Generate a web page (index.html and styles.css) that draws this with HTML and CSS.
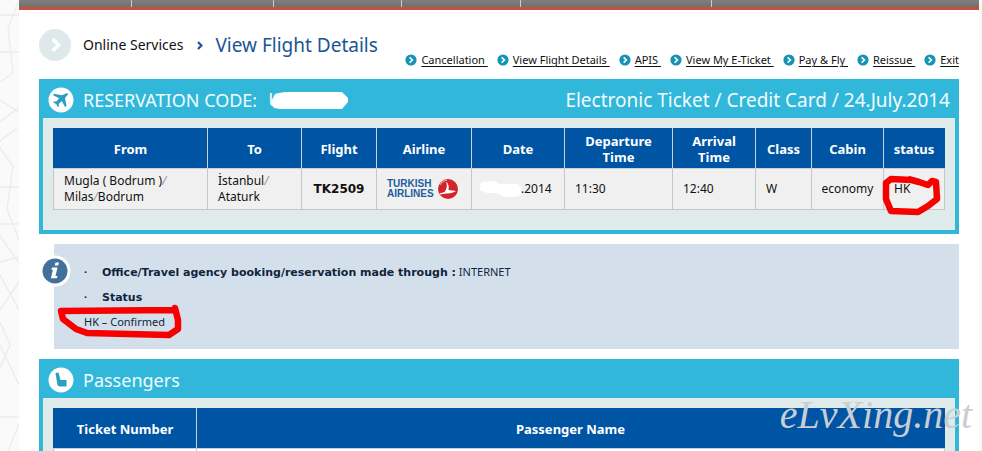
FILE: index.html
```html
<!DOCTYPE html>
<html lang="en">
<head>
  <meta charset="UTF-8">
  <meta name="viewport" content="width=device-width, initial-scale=1.0">
  <title>View Flight Details</title>
  <link rel="stylesheet" href="styles.css">
</head>
<body>
  <svg class="sprite" aria-hidden="true">
    <symbol id="arrow" viewBox="0 0 12 12">
      <circle cx="6" cy="6" r="5.6" fill="#1593b5"/>
      <path d="M4.6 3.4 7.4 6 4.6 8.6" fill="none" stroke="#fff" stroke-width="1.6"/>
    </symbol>
    <symbol id="scribble" viewBox="0 0 19 451">
      <path d="M0 15H19M18 2 8 28 13 73 0 82M0 52H19M0 100 19 112M0 122 19 107M0 141 17 128M0 148 13 166 7 209 19 240M0 187H19M0 224H19M0 262 19 257M0 236 19 263M0 275 19 310M0 310 19 282M0 322 10 345 0 368M0 345 19 385M8 451 19 424M0 417H19" fill="none" stroke="#ececec" stroke-width="1.4"/>
    </symbol>
  </svg>

  <div class="layout">
    <div class="edge"><svg class="edge-lines" aria-hidden="true"><use href="#scribble"/></svg></div>

    <main class="page">
      <nav class="topbar" aria-label="Main">
        <span class="tab tab-1"></span>
        <span class="tab tab-2"></span>
        <span class="tab tab-3"></span>
        <span class="tab tab-4"></span>
        <span class="tab tab-5"></span>
      </nav>

      <div class="content">
        <header class="heading">
          <svg class="heading-icon" viewBox="0 0 32 32" aria-hidden="true">
            <circle cx="16" cy="16" r="16" fill="#dfe9eb"/>
            <path d="M13.5 10 19.5 16 13.5 22" fill="none" stroke="#fff" stroke-width="3.6"/>
          </svg>
          <span class="section">Online Services</span>
          <svg class="crumb" viewBox="0 0 6 9" aria-hidden="true"><path d="M1 1 4.4 4.5 1 8" fill="none" stroke="#1b5595" stroke-width="2.2"/></svg>
          <h1>View Flight Details</h1>
        </header>

        <ul class="actions">
          <li><svg class="arrow" aria-hidden="true"><use href="#arrow"/></svg><a href="#">Cancellation&nbsp;</a></li>
          <li><svg class="arrow" aria-hidden="true"><use href="#arrow"/></svg><a href="#">View Flight Details&nbsp;</a></li>
          <li><svg class="arrow" aria-hidden="true"><use href="#arrow"/></svg><a href="#">APIS&nbsp;</a></li>
          <li><svg class="arrow" aria-hidden="true"><use href="#arrow"/></svg><a href="#">View My E-Ticket&nbsp;</a></li>
          <li><svg class="arrow" aria-hidden="true"><use href="#arrow"/></svg><a href="#">Pay &amp; Fly&nbsp;</a></li>
          <li><svg class="arrow" aria-hidden="true"><use href="#arrow"/></svg><a href="#">Reissue&nbsp;</a></li>
          <li><svg class="arrow" aria-hidden="true"><use href="#arrow"/></svg><a href="#">Exit</a></li>
        </ul>

        <section class="panel">
          <div class="panel-head">
            <svg class="panel-icon" viewBox="0 0 26 26" aria-hidden="true">
              <circle cx="13" cy="13" r="12.5" fill="#fff"/>
              <path d="M18.6 6.3c1-.4 1.8.3 1.3 1.3L17 11l1.5 8-1.5 1-3.2-6-3.1 3 .2 2.4-1 .8-1.7-3.2-3.1-1.6.8-1 2.4.1 2.8-3.2-6-3.1 1-1.4 7.8 1.4z" fill="#2a9fc2"/>
            </svg>
            <h2>RESERVATION CODE:</h2>
            <span class="code">U<svg class="blot" viewBox="0 0 77 18" aria-hidden="true"><path d="M4 2 8 1 14 0H71L77 6V10L71 17H9L3 16 0 10z" fill="#fff"/></svg></span>
            <span class="issued">Electronic Ticket / Credit Card / 24.July.2014</span>
          </div>
          <div class="panel-body">
            <table class="grid flights">
              <colgroup>
                <col class="c-from"><col class="c-to"><col class="c-flight"><col class="c-airline"><col class="c-date">
                <col class="c-dep"><col class="c-arr"><col class="c-class"><col class="c-cabin"><col class="c-status">
              </colgroup>
              <thead>
                <tr>
                  <th>From</th><th>To</th><th>Flight</th><th>Airline</th><th>Date</th>
                  <th>Departure Time</th><th>Arrival Time</th><th>Class</th><th>Cabin</th><th>status</th>
                </tr>
              </thead>
              <tbody>
                <tr>
                  <td>Mugla ( Bodrum )<i>/</i><br>Milas<i>/</i>Bodrum</td>
                  <td>İstanbul<i>/</i><br>Ataturk</td>
                  <td class="flight-no">TK2509</td>
                  <td>
                    <div class="logo">
                      <span class="logo-text">TURKISH<br>AIRLINES</span>
                      <svg class="logo-mark" viewBox="0 0 20 20" aria-hidden="true">
                        <circle cx="10" cy="10" r="10" fill="#d3242b"/>
                        <path d="M2 6A9 9 0 0 1 9 1" fill="none" stroke="#ee8a85" stroke-width="1.5"/>
                        <path d="M8 2.5C11 5 11 8.5 10.5 11L18 12C15 14 11 14.5 8 14.5L2 15.5 1.5 14.5 6.5 13C9 10 9.5 6 8 2.5z" fill="#fff"/>
                      </svg>
                    </div>
                  </td>
                  <td class="date"><svg class="smudge" viewBox="0 0 41 16" aria-hidden="true"><path d="M3 1 15 0 20 3 38 3 41 6V14L36 16H24L17 12H7L0 9V3z" fill="#fff"/></svg>.2014</td>
                  <td>11:30</td>
                  <td>12:40</td>
                  <td>W</td>
                  <td class="middle">economy</td>
                  <td class="status">HK
                    <svg class="ring ring-status" viewBox="0 0 60 44" aria-hidden="true"><path d="M29 6 9 5 4 9 4 25 9 37 36 38 46 32 55 25 54 8 50 7 46 11 37 8 26 5" fill="none" stroke="#f70000" stroke-width="6.5" stroke-linejoin="round"/></svg>
                  </td>
                </tr>
              </tbody>
            </table>
          </div>
        </section>

        <section class="info">
          <svg class="info-icon" viewBox="0 0 32 32" aria-hidden="true">
            <circle cx="16" cy="16" r="15.5" fill="#fff"/>
            <circle cx="16" cy="16" r="12.5" fill="#42709a"/>
            <path d="M16.5 7.5h3.5l-.8 3h-3.5zM13 12.5h5.5l-2 8.5h2l-.6 2.3h-6l2-8.5h-1.5z" fill="#fff"/>
          </svg>
          <ul>
            <li><b>Office/Travel agency booking/reservation made through :</b> INTERNET</li>
            <li><b>Status</b></li>
          </ul>
          <p>HK – Confirmed
            <svg class="ring ring-confirmed" viewBox="0 0 128 36" aria-hidden="true"><path d="M118 6 5 7 7 15 20 25 31 29 113 31 122 25 122 16 119 4" fill="none" stroke="#f70000" stroke-width="6.5" stroke-linejoin="round" stroke-linecap="round"/></svg>
          </p>
        </section>

        <section class="panel">
          <div class="panel-head">
            <svg class="panel-icon" viewBox="0 0 26 26" aria-hidden="true">
              <circle cx="13" cy="13" r="12.5" fill="#fff"/>
              <path d="M7.5 6 10.5 5.5 12.5 13H18.5V19.5H12L9.5 18.5z" fill="#2a9fc2"/>
            </svg>
            <h2>Passengers</h2>
          </div>
          <div class="panel-body">
            <table class="grid passengers">
              <colgroup><col class="c-ticket"><col></colgroup>
              <thead>
                <tr><th>Ticket Number</th><th>Passenger Name</th></tr>
              </thead>
              <tbody>
                <tr><td></td><td></td></tr>
              </tbody>
            </table>
          </div>
        </section>
      </div>
    </main>

    <div class="edge edge-right"></div>
    <div class="watermark">eLvXing.net</div>
  </div>
</body>
</html>
```
FILE: styles.css
```css
body {
  margin: 0;
  font-family: "Noto Sans", "Open Sans", sans-serif;
  font-size: 12px;
  line-height: 16px;
  color: #111;
  background: #fff;
}
h1, h2, ul, p {
  margin: 0;
  padding: 0;
  font-weight: normal;
}
ul {
  list-style: none;
}
.sprite {
  display: none;
}
.layout {
  position: relative;
  display: flex;
  height: 100vh;
  overflow: hidden;
}
.edge {
  flex: 0 0 19px;
  background: #fafafa;
}
.edge-right {
  flex-basis: 3px;
}
.edge-lines {
  display: block;
  width: 19px;
  height: 451px;
}
.page {
  flex: 1;
  min-width: 0;
}

/* Top bar */
.topbar {
  display: flex;
  height: 7px;
  background: linear-gradient(#808080, #707070);
  border-bottom: 3px solid #c5513f;
}
.tab {
  box-sizing: border-box;
  border-right: 1px solid #ccc;
}
.tab-1 { width: 113px; }
.tab-2 { width: 142px; }
.tab-3 { width: 128px; }
.tab-4 { width: 119px; }
.tab-5 { width: 191px; }

.content {
  padding: 19px 20px 0;
}
.heading {
  display: flex;
  align-items: center;
  height: 32px;
  font-size: 14px;
}
.heading-icon {
  width: 32px;
  height: 32px;
  margin-right: 12px;
}
.crumb {
  width: 6px;
  height: 9px;
  margin: 0 12px 0 14px;
}
h1 {
  font-size: 19px;
  color: #1b5595;
}
.actions {
  display: flex;
  justify-content: flex-end;
  gap: 9px;
  font-size: 11px;
  margin-top: -9px;
  margin-bottom: 11px;
}
.actions li {
  display: flex;
  align-items: center;
  gap: 4px;
}
.actions a {
  color: #111;
  text-underline-offset: 2px;
}
.arrow {
  width: 12px;
  height: 12px;
}

/* Panels */
.panel {
  border: 4px solid #33b7d8;
  border-top: 0;
  background: #dfeaea;
  margin-bottom: 10px;
}
.panel-head {
  display: flex;
  align-items: center;
  height: 39px;
  padding: 3px 5px 0;
  box-sizing: border-box;
  background: #31b7da;
  color: #f2fcff;
  font-size: 19px;
}
.panel-icon {
  width: 26px;
  height: 26px;
  margin-right: 9px;
}
h2 {
  font-size: 18px;
}
.code {
  position: relative;
  margin-left: 11px;
}
.blot {
  position: absolute;
  left: 3px;
  top: 0;
  width: 77px;
  height: 18px;
}
.issued {
  margin-left: auto;
}
.panel-body {
  padding: 10px 10px 20px;
}
.grid {
  width: 100%;
  table-layout: fixed;
  border-collapse: collapse;
}
.grid th {
  height: 39px;
  padding: 0 10px;
  border: 1px solid #c8d0d8;
  border-top-color: #0054a4;
  background: #0054a4;
  color: #fff;
  font-size: 13px;
}
.grid th:first-child {
  border-left-color: #0054a4;
}
.grid th:last-child {
  border-right-color: #0054a4;
}
.grid td {
  height: 40px;
  padding: 0 10px;
  border: 1px solid #c6c6c6;
  background: #f0f0f0;
}
.grid i {
  color: #999;
}
.c-from { width: 154px; }
.c-to { width: 94px; }
.c-flight { width: 75px; }
.c-airline { width: 95px; }
.c-date { width: 93px; }
.c-dep { width: 108px; }
.c-arr { width: 83px; }
.c-class { width: 56px; }
.c-cabin { width: 72px; }
.c-status { width: 61px; }
.c-ticket { width: 143px; }
.grid .flight-no {
  padding: 0;
  text-align: center;
  font-family: "DejaVu Sans", sans-serif;
  font-weight: bold;
}
.grid .middle {
  padding: 0;
  text-align: center;
}
.grid .date {
  padding: 0 0 0 8px;
}
.grid .date,
.grid .status {
  white-space: nowrap;
}
.flights th:last-child {
  padding: 0;
}
.smudge {
  width: 41px;
  height: 16px;
  vertical-align: middle;
}
.status {
  position: relative;
}
.logo {
  display: flex;
  align-items: center;
  gap: 4px;
}
.logo-text {
  font: bold 10px/10px "Liberation Sans", sans-serif;
  color: #1d5da0;
}
.logo-mark {
  flex: none;
  width: 20px;
  height: 20px;
}

/* Hand-drawn red markers */
.ring {
  position: absolute;
  z-index: 1;
}
.ring-status {
  left: -2px;
  top: 5px;
  width: 60px;
  height: 44px;
}
.ring-confirmed {
  left: -28px;
  top: -5px;
  width: 128px;
  height: 36px;
}

/* Info box */
.info {
  position: relative;
  margin: 0 0 10px 15px;
  padding: 15px 30px;
  background: #d3e0ec;
  color: #10243c;
  font-size: 11px;
  line-height: 25px;
}
.info-icon {
  position: absolute;
  left: -15px;
  top: 11px;
  width: 32px;
  height: 32px;
}
.info b {
  font-family: "DejaVu Sans", sans-serif;
  line-height: 16px;
}
.info li {
  height: 25px;
}
.info li::before {
  content: "·";
  display: inline-block;
  width: 18px;
  font-weight: bold;
}
.info p {
  position: relative;
}

.passengers td {
  background: #fff;
}
.watermark {
  position: absolute;
  right: 10px;
  bottom: 16px;
  font: italic 40px/40px "Liberation Serif", serif;
  color: #c9ced3;
}
```
